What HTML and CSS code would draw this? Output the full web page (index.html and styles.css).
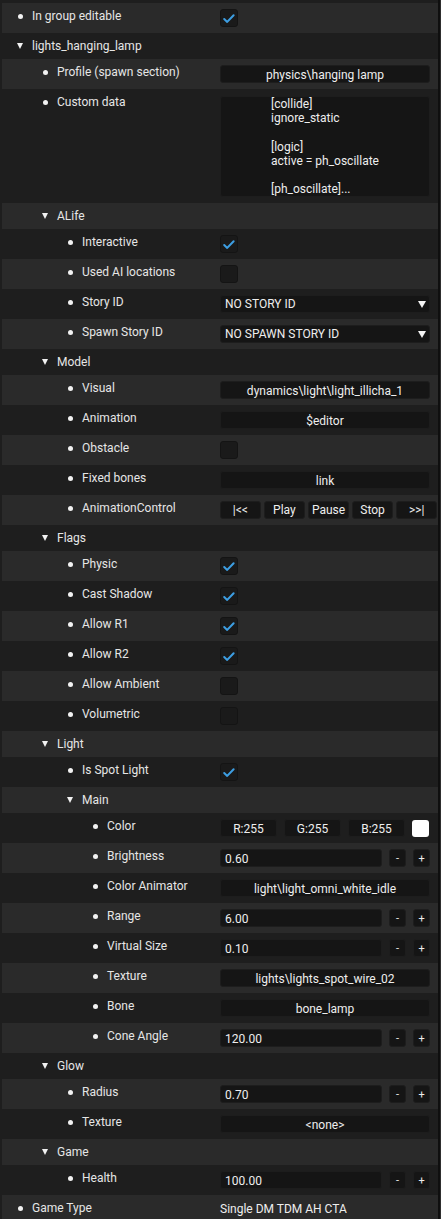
FILE: index.html
```html
<!DOCTYPE html>
<html>
<head>
<meta charset="utf-8">
<link rel="stylesheet" href="styles.css">
</head>
<body>
<div class="panel">
  <div class="row"><div class="label lv1"><span class="bullet"></span>In group editable</div><div class="value"><span class="check on"><svg viewBox="0 0 18 18"><path d="M3.6 10.2 L7 13.4 L14.2 6"/></svg></span></div></div>
  <div class="row head"><div class="label lv1"><span class="tri"></span>lights_hanging_lamp</div></div>
  <div class="row"><div class="label lv2"><span class="bullet"></span>Profile (spawn section)</div><div class="value"><div class="frame center">physics\hanging lamp</div></div></div>
  <div class="row"><div class="label lv2"><span class="bullet"></span>Custom data</div><div class="value"><div class="frame multi"><div class="mtext">[collide]<br>ignore_static<br><br>[logic]<br>active = ph_oscillate<br><br>[ph_oscillate]...</div></div></div></div>
  <div class="row head"><div class="label lv2"><span class="tri"></span>ALife</div></div>
  <div class="row"><div class="label lv3"><span class="bullet"></span>Interactive</div><div class="value"><span class="check on"><svg viewBox="0 0 18 18"><path d="M3.6 10.2 L7 13.4 L14.2 6"/></svg></span></div></div>
  <div class="row"><div class="label lv3"><span class="bullet"></span>Used AI locations</div><div class="value"><span class="check"></span></div></div>
  <div class="row"><div class="label lv3"><span class="bullet"></span>Story ID</div><div class="value"><div class="frame combo"><span>NO STORY ID</span><span class="arrow"></span></div></div></div>
  <div class="row"><div class="label lv3"><span class="bullet"></span>Spawn Story ID</div><div class="value"><div class="frame combo"><span>NO SPAWN STORY ID</span><span class="arrow"></span></div></div></div>
  <div class="row head"><div class="label lv2"><span class="tri"></span>Model</div></div>
  <div class="row"><div class="label lv3"><span class="bullet"></span>Visual</div><div class="value"><div class="frame center">dynamics\light\light_illicha_1</div></div></div>
  <div class="row"><div class="label lv3"><span class="bullet"></span>Animation</div><div class="value"><div class="frame center">$editor</div></div></div>
  <div class="row"><div class="label lv3"><span class="bullet"></span>Obstacle</div><div class="value"><span class="check"></span></div></div>
  <div class="row"><div class="label lv3"><span class="bullet"></span>Fixed bones</div><div class="value"><div class="frame center">link</div></div></div>
  <div class="row"><div class="label lv3"><span class="bullet"></span>AnimationControl</div><div class="value buttons"><span class="btn">|&lt;&lt;</span><span class="btn">Play</span><span class="btn">Pause</span><span class="btn">Stop</span><span class="btn">&gt;&gt;|</span></div></div>
  <div class="row head"><div class="label lv2"><span class="tri"></span>Flags</div></div>
  <div class="row"><div class="label lv3"><span class="bullet"></span>Physic</div><div class="value"><span class="check on"><svg viewBox="0 0 18 18"><path d="M3.6 10.2 L7 13.4 L14.2 6"/></svg></span></div></div>
  <div class="row"><div class="label lv3"><span class="bullet"></span>Cast Shadow</div><div class="value"><span class="check on"><svg viewBox="0 0 18 18"><path d="M3.6 10.2 L7 13.4 L14.2 6"/></svg></span></div></div>
  <div class="row"><div class="label lv3"><span class="bullet"></span>Allow R1</div><div class="value"><span class="check on"><svg viewBox="0 0 18 18"><path d="M3.6 10.2 L7 13.4 L14.2 6"/></svg></span></div></div>
  <div class="row"><div class="label lv3"><span class="bullet"></span>Allow R2</div><div class="value"><span class="check on"><svg viewBox="0 0 18 18"><path d="M3.6 10.2 L7 13.4 L14.2 6"/></svg></span></div></div>
  <div class="row"><div class="label lv3"><span class="bullet"></span>Allow Ambient</div><div class="value"><span class="check"></span></div></div>
  <div class="row"><div class="label lv3"><span class="bullet"></span>Volumetric</div><div class="value"><span class="check"></span></div></div>
  <div class="row head"><div class="label lv2"><span class="tri"></span>Light</div></div>
  <div class="row"><div class="label lv3"><span class="bullet"></span>Is Spot Light</div><div class="value"><span class="check on"><svg viewBox="0 0 18 18"><path d="M3.6 10.2 L7 13.4 L14.2 6"/></svg></span></div></div>
  <div class="row head"><div class="label lv3"><span class="tri"></span>Main</div></div>
  <div class="row"><div class="label lv4"><span class="bullet"></span>Color</div><div class="value rgb"><div class="frame center">R:255</div><div class="frame center">G:255</div><div class="frame center">B:255</div><span class="swatch"></span></div></div>
  <div class="row"><div class="label lv4"><span class="bullet"></span>Brightness</div><div class="value num"><div class="frame">0.60</div><span class="btn sq">-</span><span class="btn sq">+</span></div></div>
  <div class="row"><div class="label lv4"><span class="bullet"></span>Color Animator</div><div class="value"><div class="frame center">light\light_omni_white_idle</div></div></div>
  <div class="row"><div class="label lv4"><span class="bullet"></span>Range</div><div class="value num"><div class="frame">6.00</div><span class="btn sq">-</span><span class="btn sq">+</span></div></div>
  <div class="row"><div class="label lv4"><span class="bullet"></span>Virtual Size</div><div class="value num"><div class="frame">0.10</div><span class="btn sq">-</span><span class="btn sq">+</span></div></div>
  <div class="row"><div class="label lv4"><span class="bullet"></span>Texture</div><div class="value"><div class="frame center">lights\lights_spot_wire_02</div></div></div>
  <div class="row"><div class="label lv4"><span class="bullet"></span>Bone</div><div class="value"><div class="frame center">bone_lamp</div></div></div>
  <div class="row"><div class="label lv4"><span class="bullet"></span>Cone Angle</div><div class="value num"><div class="frame">120.00</div><span class="btn sq">-</span><span class="btn sq">+</span></div></div>
  <div class="row head"><div class="label lv2"><span class="tri"></span>Glow</div></div>
  <div class="row"><div class="label lv3"><span class="bullet"></span>Radius</div><div class="value num"><div class="frame">0.70</div><span class="btn sq">-</span><span class="btn sq">+</span></div></div>
  <div class="row"><div class="label lv3"><span class="bullet"></span>Texture</div><div class="value"><div class="frame center">&lt;none&gt;</div></div></div>
  <div class="row head"><div class="label lv2"><span class="tri"></span>Game</div></div>
  <div class="row"><div class="label lv3"><span class="bullet"></span>Health</div><div class="value num"><div class="frame">100.00</div><span class="btn sq">-</span><span class="btn sq">+</span></div></div>
  <div class="row"><div class="label lv1"><span class="bullet"></span>Game Type</div><div class="value plain">Single DM TDM AH CTA</div></div>
</div>
</body>
</html>
```

FILE: styles.css
```css
html {
  background: #2e2e2e;
  margin: 0;
}
body {
  margin: 0;
  width: 440px;
  height: 1219px;
  overflow: hidden;
  background: #1e1e1e;
  font-family: Roboto, "Liberation Sans", sans-serif;
  font-size: 12px;
  color: #e6e6e6;
}
.panel {
  margin-left: 2px;
  width: 436px;
  padding-top: 3px;
  border-right: 2px solid #0f0f0f;
}
.row {
  display: grid;
  grid-template-columns: 218px 210px;
  align-items: start;
  padding: 6px 0;
  box-sizing: border-box;
  min-height: 30px;
  background: #1e1e1e;
}
.row:nth-child(odd) {
  background: #2a2a2a;
}
.row.head {
  min-height: 26px;
  padding-bottom: 5px;
}
.label {
  display: flex;
  align-items: flex-start;
  line-height: 15px;
  white-space: nowrap;
}
.lv1 { padding-left: 15px; }
.lv2 { padding-left: 40px; }
.lv3 { padding-left: 65px; }
.lv4 { padding-left: 90px; }
.bullet, .tri {
  flex: none;
  width: 6px;
  margin-right: 9px;
  position: relative;
  height: 15px;
}
.bullet::before {
  content: "";
  position: absolute;
  left: 0.5px;
  top: 4.5px;
  width: 5px;
  height: 5px;
  border-radius: 50%;
  background: #f2f2f2;
}
.tri::before {
  content: "";
  position: absolute;
  left: 0;
  top: 4px;
  border-left: 3px solid transparent;
  border-right: 3px solid transparent;
  border-top: 6px solid #f2f2f2;
}
.value {
  display: flex;
  align-items: center;
  min-width: 0;
}
.frame {
  box-sizing: border-box;
  height: 18px;
  width: 210px;
  line-height: 16px;
  padding: 1px 4px 0;
  background: #151515;
  border: 1px solid #1d1d1d;
  border-radius: 3px;
  color: #eeeeee;
  white-space: nowrap;
  overflow: hidden;
}
.frame.center {
  text-align: center;
}
.frame.multi {
  height: 101px;
  margin-top: 1px;
  padding-top: 0;
  text-align: center;
}
.mtext {
  display: inline-block;
  text-align: left;
  line-height: 14.2px;
}
.combo {
  display: flex;
  justify-content: space-between;
  align-items: center;
  padding-right: 3px;
  padding-top: 0;
}
.arrow {
  width: 0;
  height: 0;
  border-left: 4.5px solid transparent;
  border-right: 4.5px solid transparent;
  border-top: 7px solid #f5f5f5;
}
.check {
  box-sizing: border-box;
  width: 18px;
  height: 18px;
  background: #1a1a1a;
  border: 1px solid #141414;
  border-radius: 3px;
  display: block;
}
.check svg {
  display: block;
  width: 16px;
  height: 16px;
}
.check path {
  fill: none;
  stroke: #3d9ee2;
  stroke-width: 2.3;
  stroke-linecap: round;
  stroke-linejoin: round;
}
.buttons {
  gap: 3.5px;
}
.btn {
  box-sizing: border-box;
  flex: none;
  width: 40.6px;
  height: 18px;
  line-height: 17px;
  text-align: center;
  background: #151515;
  border: 1px solid #1d1d1d;
  border-radius: 3px;
  color: #eeeeee;
}
.btn.sq {
  width: 17px;
  font-size: 11px;
}
.num {
  gap: 7px;
}
.num .frame {
  width: 162px;
}
.rgb {
  gap: 7px;
}
.rgb .frame {
  width: 57px;
  padding: 1px 0 0;
}
.swatch {
  flex: none;
  width: 17px;
  height: 17px;
  border-radius: 3px;
  background: #ffffff;
}
.plain {
  line-height: 15px;
  padding-top: 1px;
  color: #eeeeee;
  white-space: nowrap;
}
```
